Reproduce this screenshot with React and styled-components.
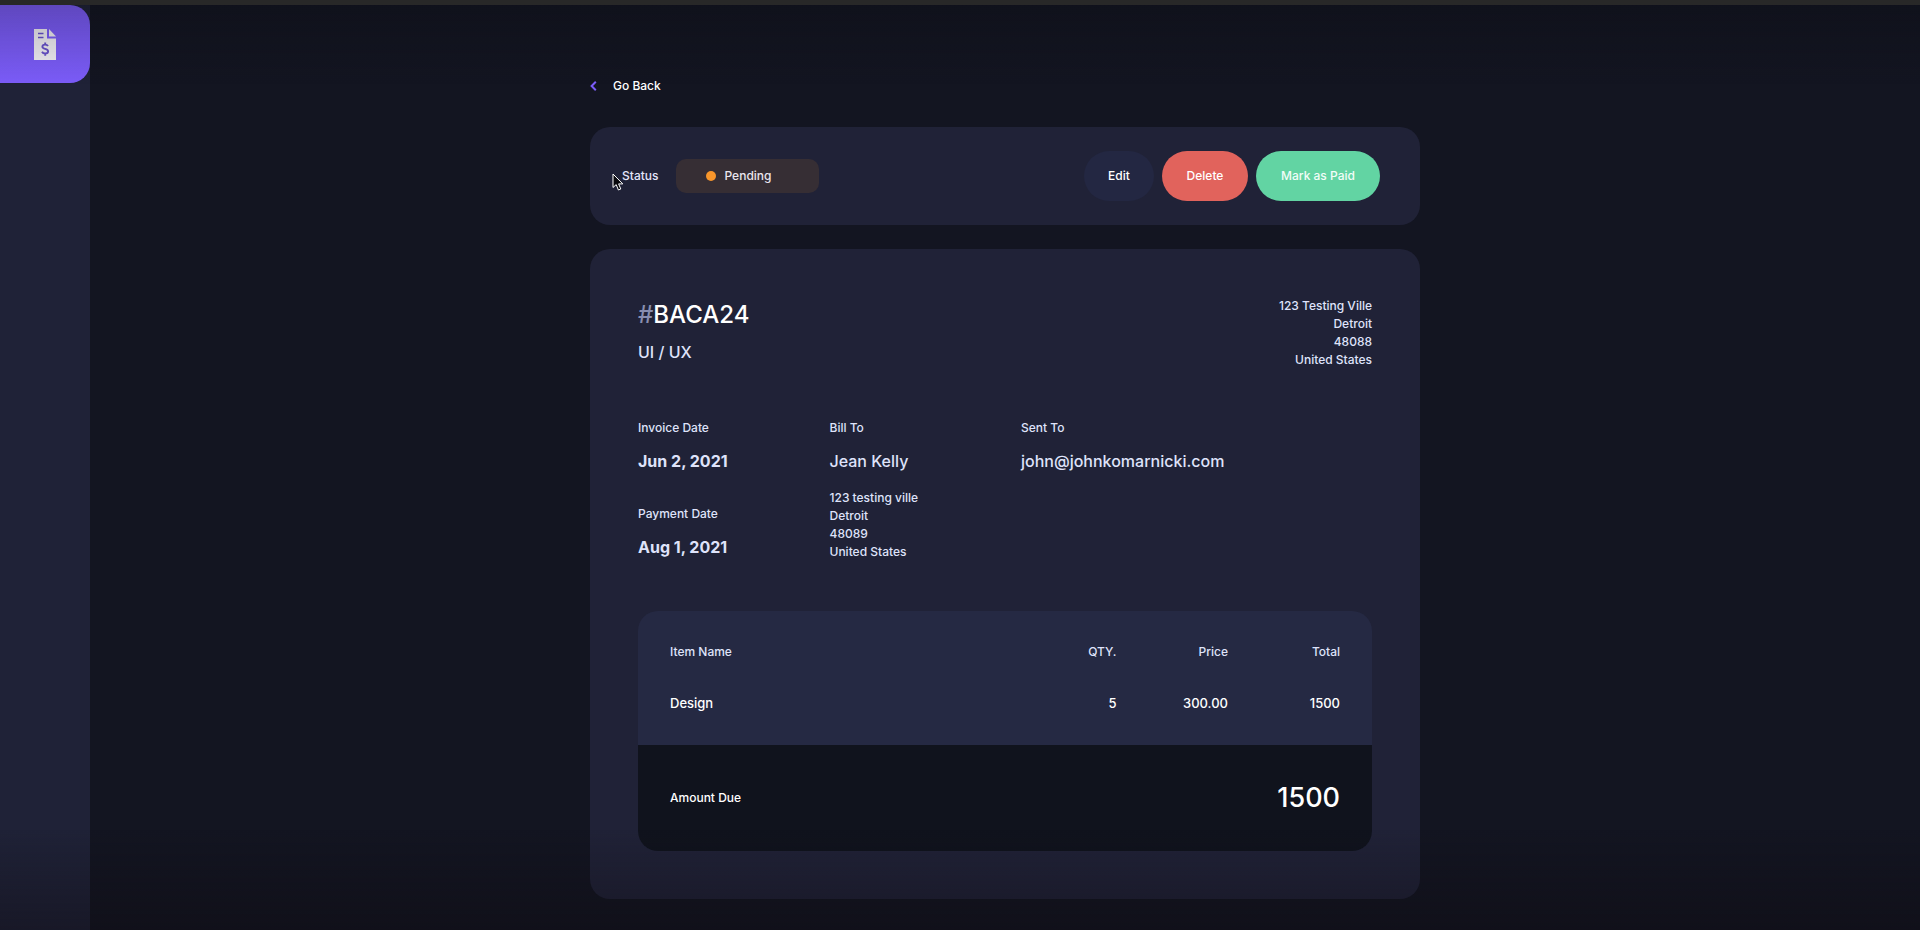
import React from "react";
import styled, { createGlobalStyle, css } from "styled-components";

const GlobalStyle = createGlobalStyle`
  * { box-sizing: border-box; margin: 0; padding: 0; }
  body {
    background: #131521;
    color: #fff;
    font-family: Inter, "Noto Sans", sans-serif;
    font-size: 12px;
    line-height: 18px;
    font-weight: 500;
  }
`;

const Shell = styled.div`
  display: flex;
  min-height: 100vh;
  border-top: 5px solid #282828;

  &::after {
    content: "";
    position: fixed;
    inset: 5px 0 0;
    pointer-events: none;
    background:
      linear-gradient(rgba(8, 8, 12, 0.24), rgba(8, 8, 12, 0) 80px),
      linear-gradient(to top, rgba(14, 10, 16, 0.4), rgba(14, 10, 16, 0) 100px);
  }
`;

const Sidebar = styled.nav`
  flex: none;
  width: 90px;
  background: #1f2237;
`;

const Brand = styled.a`
  display: flex;
  align-items: center;
  justify-content: center;
  height: 78px;
  border-radius: 0 20px 20px 0;
  background: #7b5cf8;
`;

const Content = styled.main`
  flex: 1;
  padding: 72px 24px 31px;
`;

const Invoice = styled.div`
  max-width: 830px;
  margin: 0 auto;
`;

const BackLink = styled.a`
  display: inline-flex;
  align-items: center;
  gap: 16px;
  margin-bottom: 32px;
  color: #fff;
  text-decoration: none;
`;

const Card = styled.section`
  background: #202237;
  border-radius: 20px;
`;

const StatusBar = styled(Card)`
  position: relative;
  display: flex;
  align-items: center;
  justify-content: space-between;
  padding: 24px 40px 24px 32px;
  margin-bottom: 24px;
`;

const Pointer = styled.svg`
  position: absolute;
  left: 22px;
  top: 46px;
`;

const Status = styled.div`
  display: flex;
  align-items: center;
  gap: 18px;
  color: #e4e6fb;
`;

const Badge = styled.span`
  display: flex;
  align-items: center;
  gap: 8px;
  width: 143px;
  padding: 8px 30px;
  border-radius: 10px;
  background: #362e34;
  color: #eae6ee;

  &::before {
    content: "";
    flex: none;
    width: 10px;
    height: 10px;
    border-radius: 50%;
    background: #f8962b;
  }
`;

const Actions = styled.div`
  display: flex;
  gap: 8px;
`;

const tones = {
  edit: css`width: 70px; background: #232742;`,
  delete: css`width: 86px; background: #e1635c;`,
  paid: css`width: 124px; background: #62d4a3; color: #f2fdf8;`,
};

const Button = styled.button`
  height: 50px;
  border: 0;
  border-radius: 25px;
  color: #fff;
  font: inherit;
  cursor: pointer;
  ${(p) => tones[p.$tone]}
`;

const Details = styled(Card)`
  padding: 48px;
`;

const Top = styled.header`
  display: flex;
  justify-content: space-between;
  margin-bottom: 50px;
  color: #dfe3fa;
`;

const InvoiceId = styled.h1`
  margin-bottom: 8px;
  font-size: 24px;
  line-height: 35px;
  font-weight: 500;
  color: #fff;

  span { color: #888eb0; }
`;

const Project = styled.p`
  font-size: 16px;
  line-height: 24px;
`;

const Address = styled.address`
  font-style: normal;
  text-align: ${(p) => p.$align || "left"};
`;

const Parties = styled.div`
  display: grid;
  grid-template-columns: 1fr 1fr 2fr;
  gap: 16px;
  margin-bottom: 50px;
  color: #dfe3fa;
`;

const Column = styled.div`
  display: flex;
  flex-direction: column;
  gap: ${(p) => p.$gap || 16}px;
`;

const Label = styled.h2`
  margin-bottom: 12px;
  font-size: 12px;
  line-height: 18px;
  font-weight: 500;
`;

const Value = styled.p`
  font-size: 16px;
  line-height: 24px;
  font-weight: ${(p) => (p.$bold ? 700 : 500)};
`;

const Items = styled.table`
  width: 100%;
  table-layout: fixed;
  border-spacing: 0;
  border-radius: 20px;
  overflow: hidden;
  background: #252943;

  th, td {
    padding: 32px 0;
    font-weight: 500;
    text-align: right;
  }
  th:first-child, td:first-child {
    padding-left: 32px;
    text-align: left;
  }
  th:last-child, td:last-child { padding-right: 32px; }
  thead th {
    padding-bottom: 0;
    color: #dfe3fa;
  }
  tbody td {
    font-size: 13px;
    line-height: 20px;
  }
  tfoot { background: #10131d; }
`;

const NameCol = styled.col`
  width: 50%;
`;

const TotalCol = styled.col`
  width: 144px;
`;

const AmountDue = styled.td`
  font-size: 27px;
  line-height: 42px;
`;

const ITEMS = [{ name: "Design", qty: 5, price: "300.00", total: 1500 }];

function AddressLines({ lines, align }) {
  return (
    <Address $align={align}>
      {lines.map((line) => <div key={line}>{line}</div>)}
    </Address>
  );
}

function Field({ label, value, bold }) {
  return (
    <div>
      <Label>{label}</Label>
      <Value $bold={bold}>{value}</Value>
    </div>
  );
}

export default function App() {
  return (
    <>
      <GlobalStyle />
      <Shell>
        <Sidebar>
          <Brand href="#" aria-label="Invoices">
            <svg width="22" height="31" viewBox="0 0 22 31" aria-hidden="true">
              <path d="M0 0H13V9.4H22V31H0Z" fill="#f0eef4" />
              <path d="M15 0L22 7.4H15Z" fill="#f0eef4" />
              <path d="M4 4.5H9.5M4 8.5H9.5" stroke="#6852cc" strokeWidth="1.5" />
              <path d="M14 17C13.4 16 12.4 15.6 11.1 15.6C9.5 15.6 8.4 16.3 8.4 17.7C8.4 20.6 14.1 19 14.1 22.2C14.1 23.7 12.9 24.5 11.2 24.5C9.7 24.5 8.6 23.9 8 22.8M11.2 13.4V15.5M11.2 24.5V26.8" fill="none" stroke="#6852cc" strokeWidth="1.9" />
            </svg>
          </Brand>
        </Sidebar>
        <Content>
          <Invoice>
            <BackLink href="#">
              <svg width="7" height="10" viewBox="0 0 7 10" aria-hidden="true">
                <path d="M5.8 0.8L1.6 5L5.8 9.2" fill="none" stroke="#7c5dfa" strokeWidth="2" />
              </svg>
              Go Back
            </BackLink>
            <StatusBar>
              <Status>
                Status
                <Badge>Pending</Badge>
              </Status>
              <Actions>
                <Button $tone="edit">Edit</Button>
                <Button $tone="delete">Delete</Button>
                <Button $tone="paid">Mark as Paid</Button>
              </Actions>
              <Pointer width="12" height="19" viewBox="0 0 12 19" aria-hidden="true">
                <path d="M1 1V14.5L4.2 11.6L6.4 17L8.8 16L6.6 10.9H10.8Z" fill="#08080c" stroke="#fff" />
              </Pointer>
            </StatusBar>
            <Details>
              <Top>
                <div>
                  <InvoiceId><span>#</span>BACA24</InvoiceId>
                  <Project>UI / UX</Project>
                </div>
                <AddressLines align="right" lines={["123 Testing Ville", "Detroit", "48088", "United States"]} />
              </Top>
              <Parties>
                <Column $gap={32}>
                  <Field label="Invoice Date" value="Jun 2, 2021" bold />
                  <Field label="Payment Date" value="Aug 1, 2021" bold />
                </Column>
                <Column>
                  <Field label="Bill To" value="Jean Kelly" />
                  <AddressLines lines={["123 testing ville", "Detroit", "48089", "United States"]} />
                </Column>
                <Field label="Sent To" value="john@johnkomarnicki.com" />
              </Parties>
              <Items>
                <colgroup>
                  <NameCol />
                  <col />
                  <col />
                  <TotalCol />
                </colgroup>
                <thead>
                  <tr>
                    <th scope="col">Item Name</th>
                    <th scope="col">QTY.</th>
                    <th scope="col">Price</th>
                    <th scope="col">Total</th>
                  </tr>
                </thead>
                <tbody>
                  {ITEMS.map((item) => (
                    <tr key={item.name}>
                      <td>{item.name}</td>
                      <td>{item.qty}</td>
                      <td>{item.price}</td>
                      <td>{item.total}</td>
                    </tr>
                  ))}
                </tbody>
                <tfoot>
                  <tr>
                    <th scope="row" colSpan="3">Amount Due</th>
                    <AmountDue>1500</AmountDue>
                  </tr>
                </tfoot>
              </Items>
            </Details>
          </Invoice>
        </Content>
      </Shell>
    </>
  );
}
